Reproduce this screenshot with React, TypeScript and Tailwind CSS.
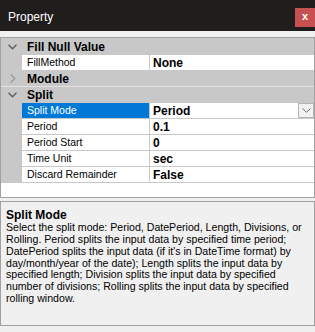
import type { ReactNode } from "react";

type Row =
  | { kind: "category"; label: string; open: boolean }
  | { kind: "prop"; label: string; value: string; selected?: boolean; dropdown?: boolean };

const rows: Row[] = [
  { kind: "category", label: "Fill Null Value", open: true },
  { kind: "prop", label: "FillMethod", value: "None" },
  { kind: "category", label: "Module", open: false },
  { kind: "category", label: "Split", open: true },
  { kind: "prop", label: "Split Mode", value: "Period", selected: true, dropdown: true },
  { kind: "prop", label: "Period", value: "0.1" },
  { kind: "prop", label: "Period Start", value: "0" },
  { kind: "prop", label: "Time Unit", value: "sec" },
  { kind: "prop", label: "Discard Remainder", value: "False" },
];

const helpLines = [
  "Select the split mode: Period, DatePeriod, Length, Divisions, or",
  "Rolling. Period splits the input data by specified time period;",
  "DatePeriod splits the input data (if it's in DateTime format) by",
  "day/month/year of the date); Length splits the input data by",
  "specified length; Division splits the input data by specified",
  "number of divisions; Rolling splits the input data by specified",
  "rolling window.",
];

function Chevron({ open }: { open: boolean }) {
  return open ? (
    <svg width="9" height="6" viewBox="0 0 9 6" className="block">
      <polyline points="0.5,0.8 4.5,4.8 8.5,0.8" fill="none" stroke="#5c5c5c" strokeWidth="1.3" />
    </svg>
  ) : (
    <svg width="6" height="9" viewBox="0 0 6 9" className="block">
      <polyline points="0.8,0.5 4.8,4.5 0.8,8.5" fill="none" stroke="#9a9a9a" strokeWidth="1.3" />
    </svg>
  );
}

function GridRow({ row, next }: { row: Row; next?: Row }): ReactNode {
  if (row.kind === "category") {
    const line = next?.kind === "category" ? "border-[#e2e2e2]" : "border-[#c8c8c8]";
    return (
      <div className={`flex h-4 items-center border-b bg-[#c8c8c8] ${line}`}>
        <div className="flex w-[21px] justify-center pl-[2px]">
          <Chevron open={row.open} />
        </div>
        <span className="pl-[5px] text-[12px] font-bold text-black">{row.label}</span>
      </div>
    );
  }
  return (
    <div className="flex h-4 border-b border-[#c8c8c8]">
      <div className="w-[21px] bg-[#c8c8c8]" />
      <div
        className={`flex w-[128px] items-center border-r border-[#c8c8c8] pl-[5px] text-[10.5px] ${
          row.selected ? "bg-[#0078d7] text-white" : "bg-white text-black"
        }`}
      >
        {row.label}
      </div>
      <div className="flex flex-1 items-center justify-between bg-white pl-[3px] text-[12px] font-bold text-black">
        <span>{row.value}</span>
        {row.dropdown && (
          <div className="flex h-[15px] w-[16px] items-center justify-center border border-[#b4b4b4] bg-[#f2f2f2]">
            <svg width="9" height="5" viewBox="0 0 9 5">
              <polyline points="0.5,0.5 4.5,4.2 8.5,0.5" fill="none" stroke="#6e6e6e" strokeWidth="1" />
            </svg>
          </div>
        )}
      </div>
    </div>
  );
}

export default function App() {
  return (
    <div className="flex h-[332px] w-[315px] flex-col bg-[#f0f0f0] font-['Liberation_Sans',Arial,sans-serif]">
      <div className="flex h-[31px] items-start justify-between bg-[#1f1e1d]">
        <span className="pl-2 pt-[8px] text-[12px] text-white">Property</span>
        <div className="mt-2 flex h-[19px] w-5 items-center justify-center bg-[#c75050] pb-[2px] text-[11px] font-bold text-white">
          x
        </div>
      </div>

      <div className="mt-[6px] flex h-[161px] flex-col border border-[#a0a0a0] bg-white">
        <div className="h-px bg-[#c8c8c8]" />
        {rows.map((row, i) => (
          <GridRow key={row.label} row={row} next={rows[i + 1]} />
        ))}
      </div>

      <div className="mt-[3px] h-[125px] border border-[#a0a0a0] bg-[#f0f0f0] px-[5px] pt-[6px] text-black">
        <div className="text-[12px] font-bold leading-[14px]">Split Mode</div>
        <div className="text-[10.6px] leading-[11.85px]">
          {helpLines.map((line) => (
            <div key={line} className="whitespace-nowrap">
              {line}
            </div>
          ))}
        </div>
      </div>
    </div>
  );
}
